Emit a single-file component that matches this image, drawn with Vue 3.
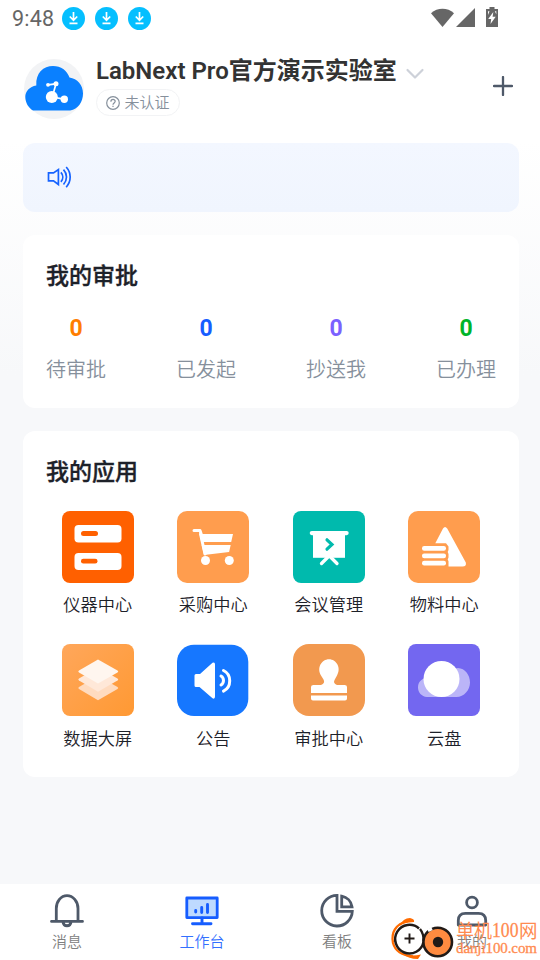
<script setup>
const stats = [
  { label: '待审批', value: 0, tone: 'orange' },
  { label: '已发起', value: 0, tone: 'blue' },
  { label: '抄送我', value: 0, tone: 'purple' },
  { label: '已办理', value: 0, tone: 'green' },
]
const apps = [
  { id: 'instrument', label: '仪器中心' },
  { id: 'cart', label: '采购中心' },
  { id: 'meeting', label: '会议管理' },
  { id: 'material', label: '物料中心' },
  { id: 'data', label: '数据大屏' },
  { id: 'notice', label: '公告' },
  { id: 'stamp', label: '审批中心' },
  { id: 'cloud', label: '云盘' },
]
const tabs = [
  { id: 'message', label: '消息' },
  { id: 'work', label: '工作台' },
  { id: 'board', label: '看板' },
  { id: 'me', label: '我的' },
]
</script>

<template>
  <div class="page">
    <div class="status">
      <span class="time">9:48</span>
      <svg v-for="n in 3" :key="n" class="download" viewBox="0 0 23 23">
        <circle cx="11.5" cy="11.5" r="11.5" fill="#05bfff" />
        <path d="M11.5 5v8M7.800 9.500l3.700 3.800 3.700-3.800M7.500 16.300h8" fill="none" stroke="#fff" stroke-width="1.700" />
      </svg>
      <svg class="signals" width="68" height="22" viewBox="0 0 68 22">
        <path d="M0 6.2C6.5.3 16.5.3 23 6.2L11.5 20Z" fill="#666" />
        <path d="M25 20 44 1v19Z" fill="#666" />
        <path d="M58.5 0h5v2H67v18H55V2h3.5Z" fill="#666" />
        <path d="m62.3 5-5.1 7h3l-.7 5 5.2-7.3h-3.1Z" fill="#fff" />
        <path d="M57 4.3h1.5L57 8ZM63.8 4.3h1.5v3Z" fill="#fff" />
      </svg>
    </div>

    <header class="header">
      <svg class="avatar" viewBox="0 0 60 60">
        <circle cx="30" cy="30" r="30" fill="#f2f3f5" />
        <path d="M9 51.5C4.500 49 1.300 43.500 1.300 38c0-5.700 4.200-10.500 11-11.600C11.500 14 19.500 7 29 7c8 0 14 4.400 16.500 11.500C53.300 19.500 59 26 59 34.500c0 8.500-5 15.700-12.800 17Z" fill="#0a80ff" />
        <g fill="#fff" stroke="#fff">
          <circle cx="27.800" cy="38" r="6" stroke="none" />
          <circle cx="40.300" cy="40.200" r="3.700" stroke="none" />
          <circle cx="32" cy="24.800" r="2.500" stroke="none" />
          <circle cx="24" cy="25.800" r="1.900" stroke="none" />
          <path d="m24 25.800 8-1-2.800 10M28 38l12 2.200" fill="none" stroke-width="1.700" />
        </g>
      </svg>
      <div class="identity">
        <div class="lab">
          <h1>LabNext Pro官方演示实验室</h1>
          <svg width="20" height="14" viewBox="0 0 20 14"><path d="m2.500 3 7.500 7.500L17.500 3" fill="none" stroke="#cdd1d9" stroke-width="2.200" stroke-linecap="round" stroke-linejoin="round" /></svg>
        </div>
        <div class="badge">
          <svg width="14" height="14" viewBox="0 0 14 14" fill="none" stroke="#86909c" stroke-width="1.200">
            <circle cx="7" cy="7" r="6.300" />
            <path d="M4.900 5.700C4.900 2.600 9.200 2.900 9.200 5.300 9.200 6.900 7 7 7 8.700M7 9.700v1.400" />
          </svg>
          <span>未认证</span>
        </div>
      </div>
      <svg class="plus" width="20" height="20" viewBox="0 0 20 20"><path d="M10 1v18M1 10h18" stroke="#4e5969" stroke-width="2.300" stroke-linecap="round" /></svg>
    </header>

    <div class="notice">
      <svg width="25" height="22" viewBox="0 0 25 22" fill="none" stroke="#1663ff" stroke-width="1.700">
        <path d="M1.500 6.900h5l4.900-3.400v15l-4.900-3.600h-5Z" />
        <path d="M13.900 6.300c2.500 2.700 2.500 6.700 0 9.600M16.500 3.700c4 4.300 4 10.500 0 14.800M19.200 1c5.300 5.900 5.300 14.300 0 20.200" />
      </svg>
    </div>

    <section class="card approvals">
      <h2>我的审批</h2>
      <div class="stats">
        <div v-for="s in stats" :key="s.label" class="stat">
          <b :class="s.tone">{{ s.value }}</b>
          <span>{{ s.label }}</span>
        </div>
      </div>
    </section>

    <section class="card apps">
      <h2>我的应用</h2>
      <div class="grid">
        <div v-for="a in apps" :key="a.id" class="app">
          <svg width="72" height="72" viewBox="0 0 72 72">
            <g v-if="a.id === 'instrument'">
              <rect width="72" height="72" rx="8" fill="#ff6000" />
              <g fill="#fff"><rect x="12.500" y="14" width="47" height="17.500" rx="4" /><rect x="12.500" y="42" width="47" height="17" rx="4" /></g>
              <g fill="#ff6000"><rect x="19" y="20" width="17" height="5" rx="2.500" /><rect x="19" y="47.800" width="16.500" height="4.700" rx="2.300" /></g>
            </g>
            <g v-else-if="a.id === 'cart'">
              <rect width="72" height="72" rx="10" fill="#ff9d4e" />
              <path d="M17 19.500h6l1.500 4.500M23.500 23 28 43" fill="none" stroke="#fff" stroke-width="3" stroke-linecap="round" stroke-linejoin="round" />
              <path d="M22.500 23H56l-1.800 8H24.200ZM24.700 34h29l-1.600 7L27 44Z" fill="#fff" />
              <circle cx="28.500" cy="49.500" r="4.500" fill="#fff" /><circle cx="52.300" cy="49.500" r="4.500" fill="#fff" />
            </g>
            <g v-else-if="a.id === 'meeting'">
              <rect width="72" height="72" rx="8" fill="#00baad" />
              <rect x="16.700" y="20" width="39" height="4.200" rx="2.100" fill="#fff" />
              <path d="M20 22h32v24.800H20Z" fill="#fff" />
              <path d="m35 46-6.500 6.500M37.500 46l6.500 6.500" stroke="#fff" stroke-width="3.300" stroke-linecap="round" />
              <path d="m34 28.800 5 4.700-5 4.700" fill="none" stroke="#00baad" stroke-width="3.200" stroke-linecap="round" />
            </g>
            <g v-else-if="a.id === 'material'">
              <rect width="72" height="72" rx="10" fill="#ff9d4e" />
              <path d="M27.300 32.300 35 17.500Q37 14.300 39.200 17.500L57.800 51.500Q58.800 55.500 54.500 55.500H40.500V50.300L39.700 48.500 40.500 46.500V43L39.700 41 40.500 39V35.500L38 32.300Z" fill="#fff" />
              <g fill="#fff"><rect x="14" y="35" width="24" height="4.800" rx="2.200" /><rect x="14" y="42.400" width="24" height="4.800" rx="2.200" /><rect x="14" y="49.700" width="24" height="4.800" rx="2.200" /></g>
            </g>
            <g v-else-if="a.id === 'data'">
              <defs><linearGradient id="dataFill" x1="0" y1="0" x2="1" y2="1"><stop stop-color="#ffa75b" /><stop offset="1" stop-color="#ff9933" /></linearGradient></defs>
              <rect width="72" height="72" rx="8" fill="url(#dataFill)" />
              <path d="m36 32 19.500 11Q57 44 55.500 45L36 56.200 17 45q-1.500-1 0-2Z" fill="#ffdbbf" />
              <path d="m36 23.500 19.500 11Q57 35.500 55.500 36.500L36 47.800 17 36.500q-1.500-1 0-2Z" fill="#ffe8d8" />
              <path d="m36 15.500 19.500 11Q57 27.500 55.500 28.500L36 39.500 17 28.500q-1.500-1 0-2Z" fill="#fff6ef" />
            </g>
            <g v-else-if="a.id === 'notice'">
              <rect y=".7" width="71.300" height="71.300" rx="17" fill="#1677ff" />
              <path d="M19 30h4L35.500 18.800Q38 17.500 38 20.500v32Q38 55.500 35.500 54.300L22.500 43H19q-1.500 0-1.500-1.500v-10Q17.500 30 19 30Z" fill="#fff" />
              <path d="M44 32c3.300 2 3.300 7 0 9M46.500 26.500c8.300 4 8.300 16.700 0 20.700" fill="none" stroke="#fff" stroke-width="3" stroke-linecap="round" />
            </g>
            <g v-else-if="a.id === 'stamp'">
              <rect width="72" height="72" rx="16" fill="#f2994f" />
              <path d="M18 49v-6q0-2 2.500-2H28Q32.500 39 30.500 35.500L28 31.500C23.500 24 28.500 15.300 36 15.300S48.500 24 44 31.500L41.800 35.500Q39.500 39 44 41h7.500Q54 41 54 43v6ZM18 51.500h36v3q0 2-2 2H20q-2 0-2-2Z" fill="#fff" />
            </g>
            <g v-else>
              <rect width="72" height="72" rx="8" fill="#7367f0" />
              <path d="M19 53C13.500 52.500 10 48.500 10 43.500c0-5 3-8.500 7.500-9.500H36L43 26.500Q47 24 50 24c7 .3 12 7 12 14.500S56 53 48.500 53Z" fill="#bbb5f8" />
              <circle cx="33.500" cy="35" r="18" fill="#fff" />
            </g>
          </svg>
          <span>{{ a.label }}</span>
        </div>
      </div>
    </section>

    <nav class="tabs">
      <div v-for="t in tabs" :key="t.id" class="tab" :class="{ active: t.id === 'work' }">
        <svg width="36" height="36" viewBox="0 0 36 36" fill="none" stroke="#4e5969" stroke-width="2.800" stroke-linecap="round" stroke-linejoin="round">
          <g v-if="t.id === 'message'"><path d="M7.300 29V16.500C7.300 9.500 12 3.600 18 3.600S29 9.500 29 16.500V29M2.500 29.400h31M14 30c.6 5 7.400 5 8 0" /></g>
          <g v-else-if="t.id === 'work'" stroke="#165dff">
            <path d="M2.800 6h30.400v19.600H2.800Z" fill="#bedaff" /><path d="M18 26v5M8.500 31.800h18.500M11.700 18.500V20M17.700 15.500V20.500M23.500 12.500V20.500" stroke-width="2.900" />
          </g>
          <g v-else-if="t.id === 'board'"><path d="M18 3.400A15.300 15.300 0 1 0 33.300 19.300H18ZM22.700 4.200v10.600h10.300C32.200 9.300 28 5.200 22.700 4.200Z" stroke-linejoin="miter" /></g>
          <g v-else><circle cx="18" cy="10.500" r="5.400" /><path d="M4.300 33v-4.500q0-7.200 7.200-7.200h13q7.200 0 7.200 7.200V33Z" /></g>
        </svg>
        <span>{{ t.label }}</span>
      </div>
    </nav>

    <svg class="watermark" width="152" height="46" viewBox="0 0 152 46">
      <g fill="none">
        <path d="M18 6C5 9 1 18 3 28c2.500 9 9 12.500 20 13.500" stroke="#ff6b00" stroke-width="2.300" />
        <path d="M9.500 11Q13 3 20 3q5 1 4 4l-5 .500Q13 8 9.500 11ZM12 38q6 6 16 6l3-4.500Q20 42 12 38Z" fill="#ff6b00" />
        <path d="M29 13.500A14.300 14.300 0 1 0 33.500 27" fill="#fff" stroke="#211a17" stroke-width="2.500" />
        <path d="M14.500 23.500h10M19.500 18.500v10" stroke="#211a17" stroke-width="1.900" />
        <path d="M30 14q4 5 3.500 12" stroke="#211a17" stroke-width="2.300" />
        <circle cx="47.700" cy="27" r="14.300" fill="#ff8b40" stroke="#211a17" stroke-width="2.600" />
        <path d="m38 15.700 4-2" stroke="#fff" stroke-width="3" />
        <circle cx="48" cy="27" r="5.200" fill="#211a17" />
      </g>
      <g class="site">
        <text x="66" y="22.500" textLength="36" lengthAdjust="spacingAndGlyphs">单机</text>
        <text x="102" y="22" textLength="26.500" lengthAdjust="spacingAndGlyphs" class="number">100</text>
        <text x="129" y="22.500" textLength="18.500" lengthAdjust="spacingAndGlyphs">网</text>
      </g>
      <text x="66" y="37.500" textLength="81" class="domain">danji100.com</text>
    </svg>
  </div>
</template>

<style>
body { margin: 0; }
</style>
<style scoped>
.page {
  position: relative;
  box-sizing: border-box;
  width: 540px;
  height: 960px;
  display: flex;
  flex-direction: column;
  background: linear-gradient(#fff 0, #fff 140px, #f7f8fa 375px);
  font-family: Roboto, "Noto Sans CJK SC", sans-serif;
  overflow: hidden;
}
svg { display: block; flex: none; }
h1, h2 { margin: 0; white-space: nowrap; }
.status { height: 37px; display: flex; align-items: center; gap: 10px; padding-left: 12px; color: #666; }
.time { width: 40px; font-size: 21.500px; letter-spacing: .2px; }
.download { width: 23px; height: 23px; }
.signals { margin: -1px 41px 0 auto; }
.header { height: 106px; box-sizing: border-box; display: flex; padding: 22px 27px 0 24px; }
.avatar { width: 60px; height: 60px; }
.identity { margin: -6px 0 0 12px; }
.lab { display: flex; align-items: center; gap: 8px; height: 36px; }
.lab h1 { color: #333; font-size: 24px; line-height: 36px; font-weight: 600; }
.lab svg { margin-top: 6px; }
.badge { box-sizing: border-box; width: 84px; height: 27px; border: 1px solid #f2f3f5; border-radius: 14px; display: flex; align-items: center; justify-content: center; gap: 4px; color: #86909c; font-size: 15px; line-height: 20px; font-weight: 350; }
.plus { margin: 17px 0 0 auto; }
.notice { margin: 0 21px 0 23px; height: 69px; box-sizing: border-box; padding: 23px 24px; border-radius: 12px; background: linear-gradient(#f3f7ff, #f0f5fe); }
.card { margin: 23px 21px 0 23px; border-radius: 12px; background: #fff; box-sizing: border-box; }
.card h2 { font-size: 23px; line-height: 34px; font-weight: 500; color: #1d2129; -webkit-text-stroke: .35px #1d2129; }
.approvals { height: 173px; padding: 25px 23px 0 23px; }
.stats { display: flex; justify-content: space-between; margin-top: 19px; }
.stat { display: flex; flex-direction: column; align-items: center; color: #86909c; font-size: 20px; line-height: 30px; font-weight: 350; }
.stat b { font-size: 23px; line-height: 32px; margin-bottom: 10px; font-weight: 700; }
.orange { color: #ff7d00; }
.blue { color: #165dff; }
.purple { color: #7b61ff; }
.green { color: #00b42a; }
.apps { height: 346px; padding: 25px 17px 0; }
.apps h2 { padding-left: 6px; }
.grid { display: grid; grid-template-columns: repeat(4, 1fr); grid-auto-rows: 133px; margin-top: 21px; }
.app { display: flex; flex-direction: column; align-items: center; gap: 9px; color: #1d2129; font-size: 17.200px; line-height: 26px; font-weight: 350; }
.app:nth-child(n + 5) { gap: 10px; }
.tabs { margin-top: auto; height: 76px; display: grid; grid-template-columns: repeat(4, 1fr); background: #fff; }
.tab { display: flex; flex-direction: column; align-items: center; padding: 8px 1px 0 0; color: #808080; font-size: 15px; line-height: 24px; font-weight: 350; }
.tab span { margin-top: 2px; }
.tab.active { color: #3370ff; }
.watermark { position: absolute; left: 390px; top: 915px; }
.site { fill: #ff8b50; font: 19px "Noto Sans CJK SC", sans-serif; }
.number { font: 22px "Liberation Serif", serif; stroke: #ff8b50; stroke-width: .3px; }
.domain { fill: #ff8b50; stroke: #ff8b50; stroke-width: .3px; font: 15px "Liberation Serif", serif; }
</style>
